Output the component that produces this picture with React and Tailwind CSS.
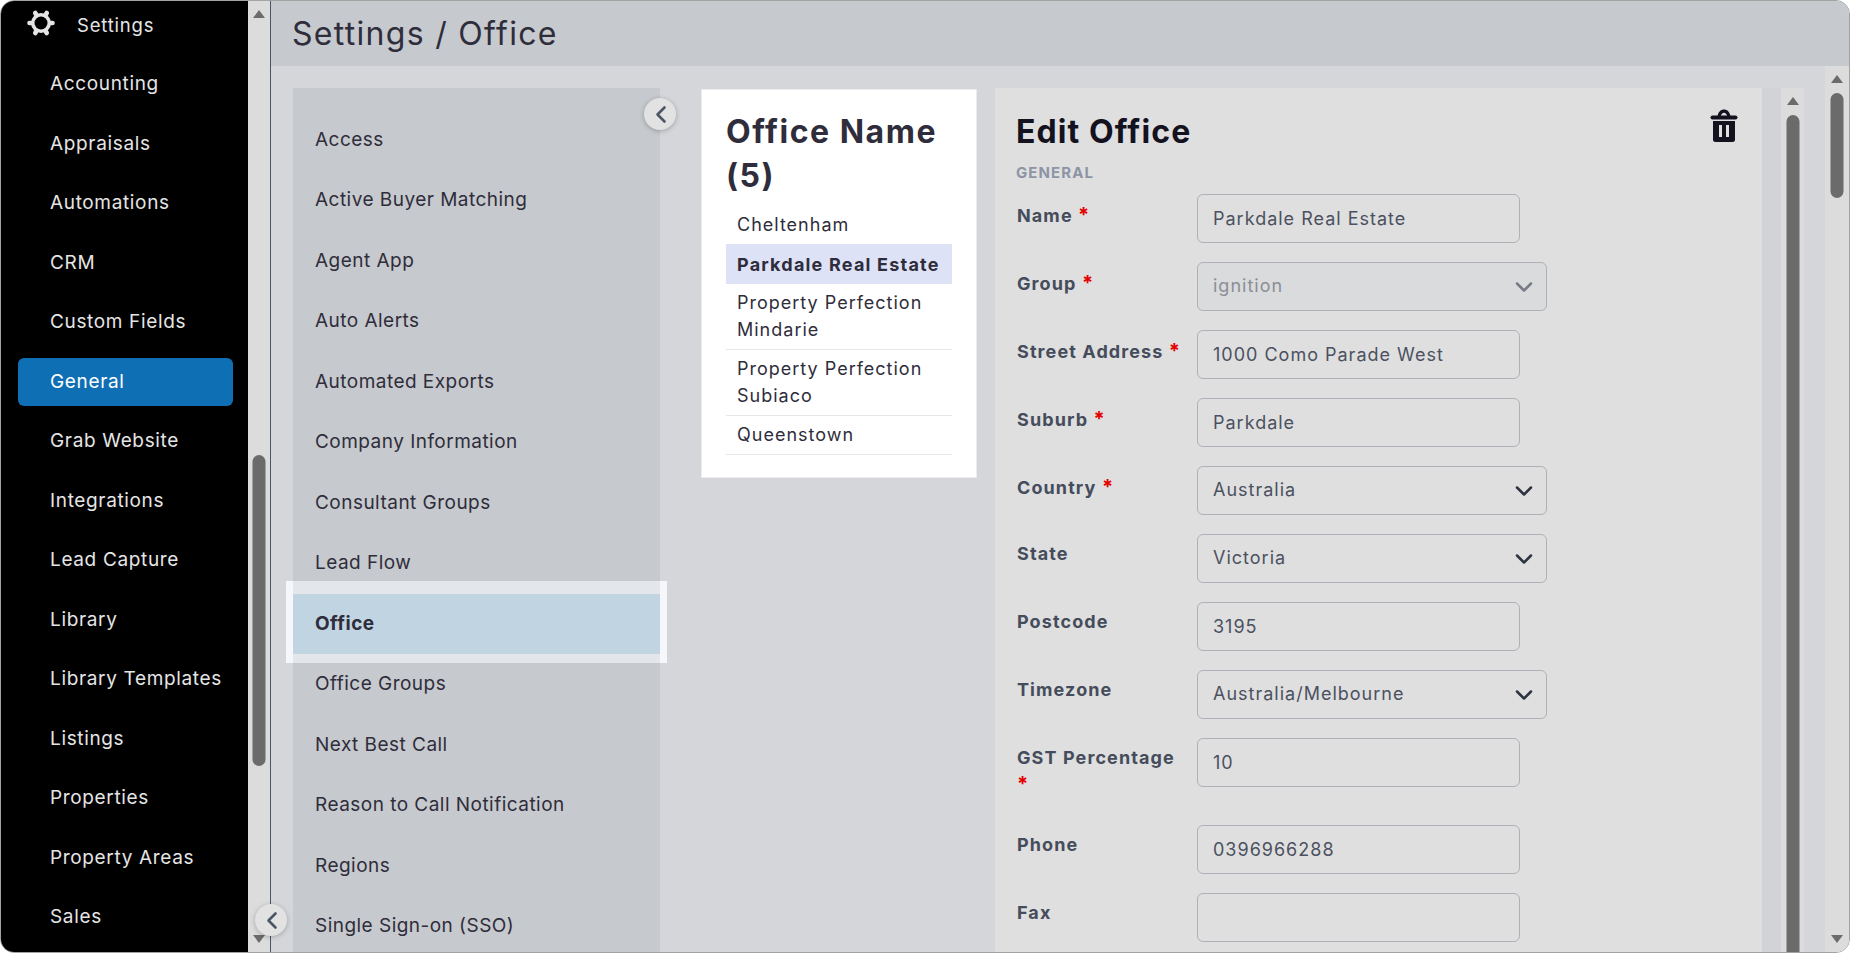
import { useState } from "react";

const FONT = "font-['Inter','Liberation_Sans',sans-serif]";

const navItems = [
    "Accounting",
    "Appraisals",
    "Automations",
    "CRM",
    "Custom Fields",
    "General",
    "Grab Website",
    "Integrations",
    "Lead Capture",
    "Library",
    "Library Templates",
    "Listings",
    "Properties",
    "Property Areas",
    "Sales",
];

const settingsItems = [
    "Access",
    "Active Buyer Matching",
    "Agent App",
    "Auto Alerts",
    "Automated Exports",
    "Company Information",
    "Consultant Groups",
    "Lead Flow",
    "Office",
    "Office Groups",
    "Next Best Call",
    "Reason to Call Notification",
    "Regions",
    "Single Sign-on (SSO)",
];

const offices = [
    { name: "Cheltenham" },
    { name: "Parkdale Real Estate", active: true },
    { name: "Property Perfection Mindarie", border: true },
    { name: "Property Perfection Subiaco", border: true },
    { name: "Queenstown", border: true },
];

const fields = [
    { label: "Name", value: "Parkdale Real Estate", required: true },
    { label: "Group", value: "ignition", required: true, select: true, disabled: true },
    { label: "Street Address", value: "1000 Como Parade West", required: true },
    { label: "Suburb", value: "Parkdale", required: true },
    { label: "Country", value: "Australia", required: true, select: true },
    { label: "State", value: "Victoria", select: true },
    { label: "Postcode", value: "3195" },
    { label: "Timezone", value: "Australia/Melbourne", select: true },
    { label: "GST Percentage", value: "10", required: true, tall: true },
    { label: "Phone", value: "0396966288" },
    { label: "Fax", value: "" },
];

function GearIcon() {
    return (
        <svg width="28" height="28" viewBox="0 0 28 28" fill="#e5e5e5" stroke="#e5e5e5" strokeLinecap="round">
            <circle cx="14" cy="14" r="10" stroke="none" />
            <path
                strokeWidth="4.600"
                d="M14 14L25.500 14M14 14L19.750 24M14 14L8.250 24M14 14L2.500 14M14 14L8.250 4M14 14L19.750 4"
            />
            <circle cx="14" cy="14" r="6.500" fill="#000" stroke="none" />
        </svg>
    );
}

function TrashIcon() {
    return (
        <svg width="28" height="33" viewBox="0 0 28 33" fill="#14121f">
            <path
                fillRule="evenodd"
                d="M7.500 7C8.500 2.500 11 .5 14 .5S19.500 2.500 20.500 7zM10.800 7h6.400c-.5-2-1.700-3.300-3.200-3.300S11.300 5 10.800 7z"
            />
            <rect x="0.500" y="6.500" width="27" height="4" rx="2" />
            <path
                fillRule="evenodd"
                d="M3 12h22v18.500a2.500 2.500 0 0 1-2.500 2.500h-17A2.500 2.500 0 0 1 3 30.500zM9 16v12h3V16zm7 0v12h3V16z"
            />
        </svg>
    );
}

function Chevron({ color }) {
    return (
        <svg width="18" height="12" viewBox="0 0 18 12" fill="none" stroke={color} strokeWidth="2.500" strokeLinecap="round" strokeLinejoin="round">
            <path d="M2 2.500l7 7 7-7" />
        </svg>
    );
}

function CollapseButton({ className }) {
    return (
        <button className={`absolute z-20 flex h-[32px] w-[32px] items-center justify-center rounded-full bg-[#e2e2e2] shadow-[0_1px_5px_rgba(0,0,0,0.25)] ${className}`}>
            <svg width="13" height="19" viewBox="0 0 13 19" fill="none" stroke="#4b5563" strokeWidth="2.600" strokeLinecap="round" strokeLinejoin="round">
                <path d="M10.500 2.500L3.500 9.500l7 7" />
            </svg>
        </button>
    );
}

// Classic scrollbar: arrows on both ends and a rounded thumb
function ScrollBar({ width, thumbTop, thumbHeight, clipped = false }) {
    return (
        <div className={`relative h-full shrink-0 overflow-hidden bg-[#dcdcdc] ${width}`}>
            <span className="absolute left-1/2 top-[9px] h-0 w-0 -translate-x-1/2 border-x-[6px] border-b-[8px] border-x-transparent border-b-[#6b6b6b]" />
            <span
                className="absolute left-1/2 w-[13px] -translate-x-1/2 rounded-full bg-[#6b6b6b]"
                style={{ top: thumbTop, height: thumbHeight }}
            />
            {!clipped && (
                <span className="absolute bottom-[9px] left-1/2 h-0 w-0 -translate-x-1/2 border-x-[6px] border-t-[8px] border-x-transparent border-t-[#6b6b6b]" />
            )}
        </div>
    );
}

function Sidebar() {
    return (
        <div className="flex h-full w-[247px] shrink-0 flex-col overflow-hidden bg-black text-[19px] tracking-[0.65px] text-[#e5e5e5]">
            <div className="flex h-[53.5px] shrink-0 items-start pl-[26px] pt-[8px]">
                <GearIcon />
                <span className="ml-[22px] mt-[2px] text-[18.500px] leading-[28px] tracking-[0.8px]">Settings</span>
            </div>
            {navItems.map((item) => (
                <div key={item} className="flex h-[59.5px] shrink-0 items-center">
                    <div
                        className={`ml-[16.500px] flex h-[48px] w-[215px] items-center rounded-md pl-[32.500px] ${
                            item === "General" ? "bg-[#0f6fb5] text-white" : ""
                        }`}
                    >
                        {item}
                    </div>
                </div>
            ))}
        </div>
    );
}

function SettingsList() {
    return (
        <div className="h-full w-[367px] shrink-0 bg-[#c6c9cd] pt-[21.500px] text-[19px] tracking-[0.47px] text-[#2f2d3b]">
            {settingsItems.map((item) =>
                item === "Office" ? (
                    <div key={item} className="relative z-10 -mx-[7px] -mb-[9px] -mt-[13px] bg-[#f6f7fa] px-[7px]">
                        <div className="h-[13px] bg-[#e3e6ea]" />
                        <div className="flex h-[60.5px] items-center bg-[#c1d4e2] pl-[22px] font-bold">{item}</div>
                        <div className="h-[9px] bg-[#e3e6ea]" />
                    </div>
                ) : (
                    <div key={item} className="flex h-[60.5px] items-center pl-[22px]">
                        {item}
                    </div>
                )
            )}
        </div>
    );
}

function OfficeCard() {
    const [selected] = useState("Parkdale Real Estate");

    return (
        <div className="mt-[1px] h-[389px] w-[276px] shrink-0 border border-[#ececee] bg-white px-[24px] pt-[20px] text-[#2f2d3b]">
            <h2 className="text-[32px] font-bold leading-[44px] tracking-[1.5px]">Office Name (5)</h2>
            <div className="mt-[7px] text-[18px] tracking-[1px]">
                {offices.map((office) => {
                    const isActive = office.name === selected;
                    return (
                        <div
                            key={office.name}
                            className={`px-[11px] leading-[27px] ${
                                isActive
                                    ? "bg-[#dee2f7] py-[6.500px] font-bold tracking-[1.200px]"
                                    : office.border
                                    ? "border-b border-[#e5e7eb] pb-[6px] pt-[5px]"
                                    : "py-[6px]"
                            }`}
                        >
                            {office.name}
                        </div>
                    );
                })}
            </div>
        </div>
    );
}

function Field({ field }) {
    return (
        <div className={`flex ${field.tall ? "h-[87px]" : "h-[68px]"}`}>
            <label
                className={`ml-[1px] w-[180px] shrink-0 pr-[10px] text-[18px] font-bold leading-[27px] tracking-[1.100px] text-[#454c5b] ${
                    field.required && !field.tall ? "pt-[8px]" : "pt-[6px]"
                }`}
            >
                {field.label}
                {field.required && (
                    <>
                        {" "}
                        <span className="text-[20px] leading-[20px] text-[#e30000]">*</span>
                    </>
                )}
            </label>
            {field.select ? (
                <div
                    className={`flex h-[49px] w-[350px] items-center justify-between rounded-md border border-[#afb1b8] pl-[15px] pr-[13px] ${
                        field.disabled ? "bg-[#dadbdd] text-[#8b8e96]" : "text-[#4b5160]"
                    }`}
                >
                    <span className="pb-[2px]">{field.value}</span>
                    <Chevron color={field.disabled ? "#777b85" : "#2d3340"} />
                </div>
            ) : (
                <input
                    readOnly
                    value={field.value}
                    className="h-[49px] w-[323px] rounded-md border border-[#afb1b8] bg-transparent px-[15px] text-[#4b5160] outline-none"
                />
            )}
        </div>
    );
}

function EditPanel() {
    return (
        <div className="relative h-full w-[767px] shrink-0 overflow-hidden bg-[#dfdfdf] pl-[21px] pt-[22px] text-[18px] tracking-[1px]">
            <h2 className="text-[32px] font-bold leading-[44px] tracking-[1.100px] text-[#14121f]">Edit Office</h2>
            <div className="mt-[7px] text-[15px] font-bold leading-[24px] tracking-[1.100px] text-[#8d95a5]">GENERAL</div>
            <div className="mt-[9px]">
                {fields.map((field) => (
                    <Field key={field.label} field={field} />
                ))}
            </div>
            <button className="absolute right-[24px] top-[21px]">
                <TrashIcon />
            </button>
        </div>
    );
}

export default function App() {
    return (
        <div className={`${FONT} h-[953px] w-[1850px] overflow-hidden bg-white`}>
            <div className="relative flex h-full overflow-hidden rounded-[14px] border border-[#a3a3a3]">
                <Sidebar />
                <ScrollBar width="w-[22px]" thumbTop={454} thumbHeight={311} />
                <div className="flex min-w-0 flex-1 flex-col border-l border-[#4a5568]">
                    <header className="flex h-[65px] shrink-0 items-center bg-[#c6c9cd] pl-[21px] text-[32px] tracking-[1.300px] text-[#2f2d3b]">
                        Settings / Office
                    </header>
                    <div className="flex min-h-0 flex-1 bg-[#d4d6da]">
                        <div className="relative flex h-full min-w-0 flex-1 pl-[22px] pt-[22px]">
                            <SettingsList />
                            <CollapseButton className="left-[373px] top-[32px]" />
                            <div className="ml-[41px]">
                                <OfficeCard />
                            </div>
                            <div className="ml-[18px] h-full">
                                <EditPanel />
                            </div>
                            <div className="h-full w-[19px] shrink-0 bg-[#d1d3d7]" />
                            <ScrollBar width="w-[23px]" thumbTop={27} thumbHeight={900} clipped />
                        </div>
                        <ScrollBar width="w-[24px]" thumbTop={27} thumbHeight={105} />
                    </div>
                </div>
                <CollapseButton className="left-[254px] top-[903px]" />
            </div>
        </div>
    );
}
